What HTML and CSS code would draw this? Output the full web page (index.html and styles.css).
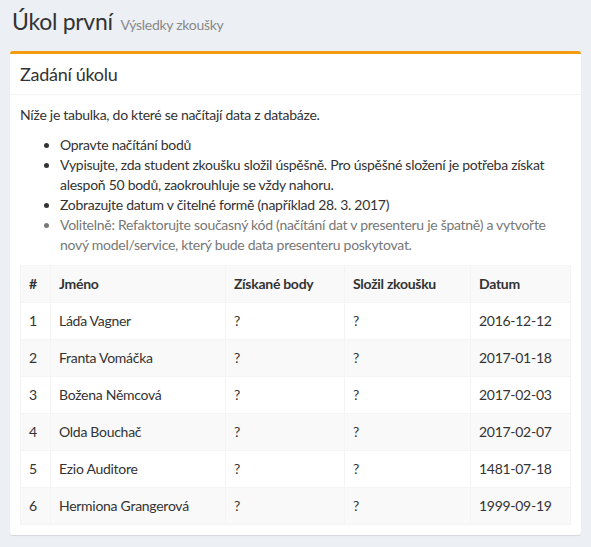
FILE: index.html
```html
<!DOCTYPE html>
<html lang="cs">
<head>
<meta charset="utf-8">
<title>Úkol první</title>
<link rel="stylesheet" href="styles.css">
</head>
<body>
<section class="content-header">
  <h1>Úkol první <small>Výsledky zkoušky</small></h1>
</section>
<section class="content">
  <div class="box">
    <div class="box-header">
      <h3 class="box-title">Zadání úkolu</h3>
    </div>
    <div class="box-body">
      <p>Níže je tabulka, do které se načítají data z databáze.</p>
      <ul>
        <li>Opravte načítání bodů</li>
        <li>Vypisujte, zda student zkoušku složil úspěšně. Pro úspěšné složení je potřeba získat alespoň 50 bodů, zaokrouhluje se vždy nahoru.</li>
        <li>Zobrazujte datum v čitelné formě (například 28. 3. 2017)</li>
        <li class="muted">Volitelně: Refaktorujte současný kód (načítání dat v presenteru je špatně) a vytvořte nový model/service, který bude data presenteru poskytovat.</li>
      </ul>
      <table class="table">
        <colgroup>
          <col class="c-num"><col class="c-name"><col class="c-pts"><col class="c-pass"><col class="c-date">
        </colgroup>
        <thead>
          <tr><th>#</th><th>Jméno</th><th>Získané body</th><th>Složil zkoušku</th><th>Datum</th></tr>
        </thead>
        <tbody>
          <tr><td>1</td><td>Láďa Vagner</td><td>?</td><td>?</td><td>2016-12-12</td></tr>
          <tr><td>2</td><td>Franta Vomáčka</td><td>?</td><td>?</td><td>2017-01-18</td></tr>
          <tr><td>3</td><td>Božena Němcová</td><td>?</td><td>?</td><td>2017-02-03</td></tr>
          <tr><td>4</td><td>Olda Bouchač</td><td>?</td><td>?</td><td>2017-02-07</td></tr>
          <tr><td>5</td><td>Ezio Auditore</td><td>?</td><td>?</td><td>1481-07-18</td></tr>
          <tr><td>6</td><td>Hermiona Grangerová</td><td>?</td><td>?</td><td>1999-09-19</td></tr>
        </tbody>
      </table>
    </div>
  </div>
</section>
</body>
</html>
```
FILE: styles.css
```css
* { box-sizing: border-box; }
html, body { margin: 0; }
body {
  background: #ecf0f5;
  color: #333;
  font-family: "Lato", "Liberation Sans", sans-serif;
  font-size: 14px;
  line-height: 20px;
  letter-spacing: -0.02em;
}
.content-header { padding: 7px 12px 0; }
.content-header h1 {
  margin: 0;
  font-size: 23px;
  font-weight: 400;
  line-height: 28px;
}
.content-header h1 small {
  font-size: 14px;
  color: #888;
  padding-left: 2px;
}
.content { padding: 12px 10px 13px; }
.box {
  background: #fff;
  border-top: 3px solid #f39c12;
  border-radius: 3px;
  box-shadow: 0 1px 1px rgba(0,0,0,0.1);
}
.box-header {
  padding: 10px;
  border-bottom: 1px solid #f4f4f4;
}
.box-title {
  margin: 0;
  font-size: 18px;
  font-weight: 400;
  line-height: 20px;
}
.box-body { padding: 10px; }
.box-body p { margin: 0 0 10px; }
.box-body ul { margin: 0 0 10px; padding-left: 40px; }
.muted { color: #777; }
.table {
  width: 100%;
  border-collapse: collapse;
  border: 1px solid #f4f4f4;
}
.c-num { width: 30px; }
.c-name { width: 175px; }
.c-pts { width: 119px; }
.c-pass { width: 126px; }
.table th, .table td {
  padding: 8px;
  border: 1px solid #f4f4f4;
  text-align: left;
  vertical-align: top;
}
.table th { font-weight: 700; }
.table thead tr { background: #f9f9f9; }
.table tbody tr:nth-child(even) { background: #f9f9f9; }
```
